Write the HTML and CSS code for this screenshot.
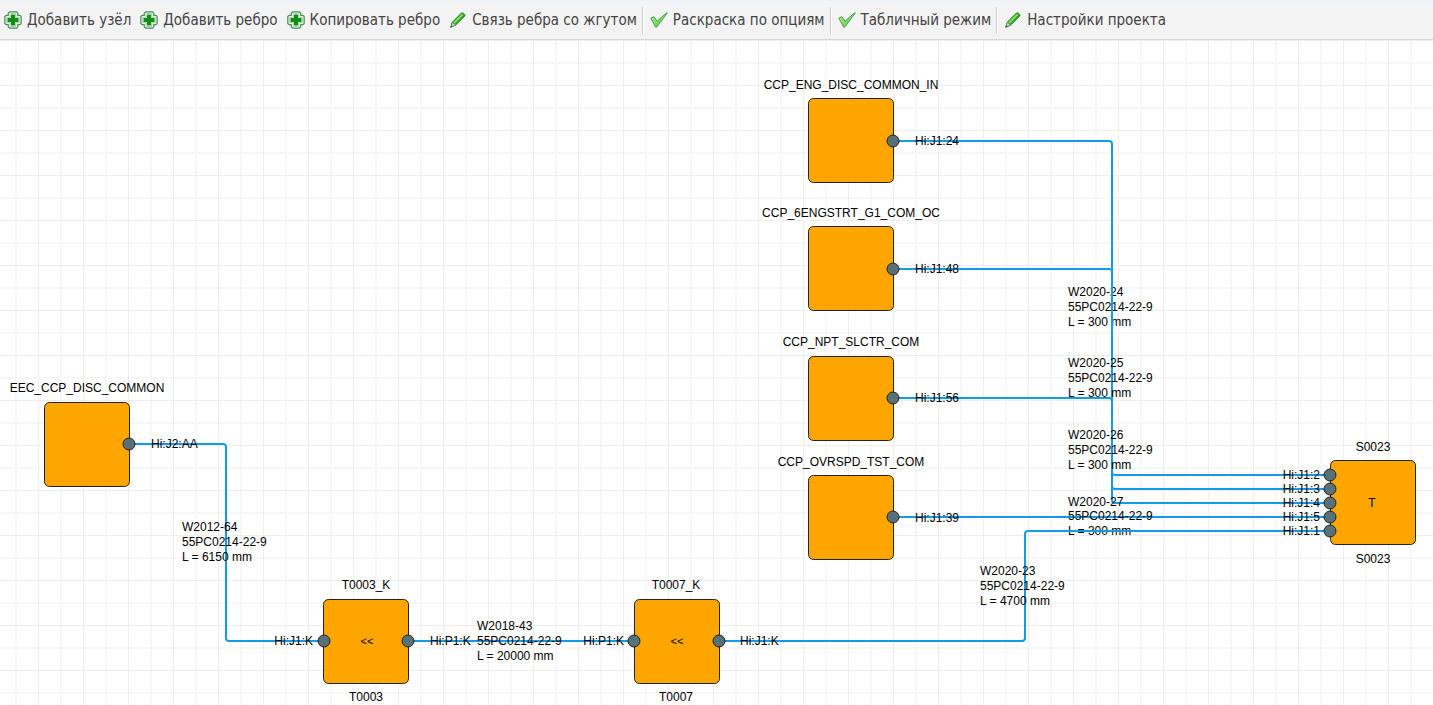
FILE: index.html
```html
<!DOCTYPE html>
<html lang="ru">
<head>
<meta charset="utf-8">
<title>Схема соединений</title>
<link rel="stylesheet" href="styles.css">
</head>
<body class="page">
<svg class="defs" width="0" height="0" aria-hidden="true">
  <defs>
    <linearGradient id="leaf" x1="0" y1="0" x2="1" y2="1">
      <stop offset="0" stop-color="#b6f08a"/><stop offset="1" stop-color="#4cc43c"/>
    </linearGradient>
    <symbol id="plus" viewBox="0 0 18 18">
      <path d="M5.500 .8h7l1.200 1.200v2.300h2.300l1.200 1.200v7l-1.200 1.200h-2.300v2.300l-1.200 1.200h-7l-1.200-1.200v-2.300H2L.8 12.500v-7L2 4.300h2.300V2z" fill="#e3eee4" stroke="#4f8f5e" stroke-width="1.200" stroke-linejoin="round"/>
      <path d="M6.500 2.500h5v4h4v5h-4v4h-5v-4h-4v-5h4z" fill="#fff" stroke="#b4d2b8" stroke-width="1"/>
      <path d="M7 3.500h4V7h3.500v4H11v3.500H7V11H3.500V7H7z" fill="#0f8f12"/>
    </symbol>
    <symbol id="pencil" viewBox="0 0 18 18">
      <path d="M1.800 16.200l1.400-5L12.200 2.300c1.300-1.300 4.600 1 3.700 2.700L6.800 14z" fill="#2fa322" stroke="#3f8a4c" stroke-width="1"/>
      <path d="M4.300 11.500l8.600-8.600 1.400 1-8.700 8.800z" fill="#8fe45a"/>
      <path d="M1.800 16.200l1.400-5 3.600 2.800z" fill="#c3d6c3" stroke="#5c8064" stroke-width=".8"/>
      <path d="M1.500 16.500l.6-2 1.500 1.100z" fill="#2b5a38"/>
    </symbol>
    <symbol id="check" viewBox="0 0 18 18">
      <path d="M.8 7.200L4 5.700l3 4.600 9.400-8.400h1L6.700 16.200H5.600z" fill="url(#leaf)" stroke="#4aa45a" stroke-width="1" stroke-linejoin="round"/>
    </symbol>
  </defs>
</svg>

<header class="toolbar">
  <button class="tool" type="button"><svg class="icon"><use href="#plus"/></svg>Добавить узёл</button>
  <button class="tool" type="button"><svg class="icon"><use href="#plus"/></svg>Добавить ребро</button>
  <button class="tool" type="button"><svg class="icon"><use href="#plus"/></svg>Копировать ребро</button>
  <button class="tool" type="button"><svg class="icon"><use href="#pencil"/></svg>Связь ребра со жгутом</button>
  <span class="divider"></span>
  <button class="tool" type="button"><svg class="icon"><use href="#check"/></svg>Раскраска по опциям</button>
  <span class="divider"></span>
  <button class="tool" type="button"><svg class="icon"><use href="#check"/></svg>Табличный режим</button>
  <span class="divider"></span>
  <button class="tool" type="button"><svg class="icon"><use href="#pencil"/></svg>Настройки проекта</button>
</header>

<main class="workspace">
  <svg class="canvas">
    <defs>
      <pattern id="grid" x="38" y="0" width="45" height="45" patternUnits="userSpaceOnUse">
        <path class="grid-minor" d="M23 0v45M0 23h45"/>
        <path class="grid-major" d="M0 0h45v1H1v44H0z"/>
      </pattern>
      <symbol id="box" width="86" height="86" viewBox="0 0 86 86">
        <rect class="box" x=".5" y=".5" width="85" height="84" rx="5"/>
      </symbol>
    </defs>
    <rect width="100%" height="100%" fill="url(#grid)"/>

    <use href="#box" x="808" y="58"/>
    <use href="#box" x="808" y="186"/>
    <use href="#box" x="808" y="316"/>
    <use href="#box" x="808" y="435"/>
    <use href="#box" x="44" y="362"/>
    <use href="#box" x="323" y="559"/>
    <use href="#box" x="634" y="559"/>
    <use href="#box" x="1330" y="420"/>

    <g class="edge">
      <path class="wire" d="M129 404H223q3 0 3 3V598q0 3 3 3H323"/>
      <text><tspan x="182" y="491">W2012-64</tspan><tspan x="182" dy="15">55PC0214-22-9</tspan><tspan x="182" dy="15">L = 6150 mm</tspan></text>
    </g>
    <g class="edge">
      <path class="wire" d="M408 601H634"/>
      <text><tspan x="477" y="590">W2018-43</tspan><tspan x="477" dy="15">55PC0214-22-9</tspan><tspan x="477" dy="15">L = 20000 mm</tspan></text>
    </g>
    <g class="edge">
      <path class="wire" d="M893 101H1109q3 0 3 3V432q0 3 3 3H1330"/>
      <text><tspan x="1068" y="256">W2020-24</tspan><tspan x="1068" dy="15">55PC0214-22-9</tspan><tspan x="1068" dy="15">L = 300 mm</tspan></text>
    </g>
    <g class="edge">
      <path class="wire" d="M893 229H1109q3 0 3 3V446q0 3 3 3H1330"/>
      <text><tspan x="1068" y="327">W2020-25</tspan><tspan x="1068" dy="15">55PC0214-22-9</tspan><tspan x="1068" dy="15">L = 300 mm</tspan></text>
    </g>
    <g class="edge">
      <path class="wire" d="M893 358H1109q3 0 3 3V460q0 3 3 3H1330"/>
      <text><tspan x="1068" y="399">W2020-26</tspan><tspan x="1068" dy="15">55PC0214-22-9</tspan><tspan x="1068" dy="15">L = 300 mm</tspan></text>
    </g>
    <g class="edge">
      <path class="wire" d="M893 477H1330"/>
      <text><tspan x="1068" y="466">W2020-27</tspan><tspan x="1068" dy="14">55PC0214-22-9</tspan><tspan x="1068" dy="15">L = 300 mm</tspan></text>
    </g>
    <g class="edge">
      <path class="wire" d="M718 601H1022q3 0 3-3V494q0-3 3-3H1330"/>
      <text><tspan x="980" y="535">W2020-23</tspan><tspan x="980" dy="15">55PC0214-22-9</tspan><tspan x="980" dy="15">L = 4700 mm</tspan></text>
    </g>

    <g class="ports">
      <circle cx="893" cy="101" r="6"/>
      <circle cx="893" cy="229" r="6"/>
      <circle cx="893" cy="358" r="6"/>
      <circle cx="893" cy="477" r="6"/>
      <circle cx="129" cy="404" r="6"/>
      <circle cx="324" cy="601" r="6"/>
      <circle cx="408" cy="601" r="6"/>
      <circle cx="634" cy="601" r="6"/>
      <circle cx="719" cy="601" r="6"/>
      <circle cx="1330" cy="435" r="6"/>
      <circle cx="1330" cy="449" r="6"/>
      <circle cx="1330" cy="463" r="6"/>
      <circle cx="1330" cy="477" r="6"/>
      <circle cx="1330" cy="491" r="6"/>
    </g>

    <g class="out">
      <text x="915" y="105">Hi:J1:24</text>
      <text x="915" y="233">Hi:J1:48</text>
      <text x="915" y="362">Hi:J1:56</text>
      <text x="915" y="482">Hi:J1:39</text>
      <text x="151" y="408">Hi:J2:AA</text>
      <text x="430" y="605">Hi:P1:K</text>
      <text x="740" y="605">Hi:J1:K</text>
    </g>
    <g class="in">
      <text x="313" y="605">Hi:J1:K</text>
      <text x="624" y="605">Hi:P1:K</text>
      <text x="1320" y="439">Hi:J1:2</text>
      <text x="1320" y="453">Hi:J1:3</text>
      <text x="1320" y="467">Hi:J1:4</text>
      <text x="1320" y="481">Hi:J1:5</text>
      <text x="1320" y="495">Hi:J1:1</text>
    </g>
    <g class="names">
      <text x="851" y="49">CCP_ENG_DISC_COMMON_IN</text>
      <text x="851" y="177">CCP_6ENGSTRT_G1_COM_OC</text>
      <text x="851" y="306">CCP_NPT_SLCTR_COM</text>
      <text x="851" y="426">CCP_OVRSPD_TST_COM</text>
      <text x="87" y="352">EEC_CCP_DISC_COMMON</text>
      <text x="366" y="549">T0003_K</text>
      <text x="366" y="661">T0003</text>
      <text x="676" y="549">T0007_K</text>
      <text x="676" y="661">T0007</text>
      <text x="1373" y="411">S0023</text>
      <text x="1373" y="523">S0023</text>
      <text class="glyph" x="367" y="605">&lt;&lt;</text>
      <text class="glyph" x="677" y="605">&lt;&lt;</text>
      <text x="1372" y="467">T</text>
    </g>
  </svg>
</main>
</body>
</html>
```
FILE: styles.css
```css
.page {
  margin: 0;
  min-height: 100vh;
  display: flex;
  flex-direction: column;
  background: #fff;
}

.defs {
  position: absolute;
}

.toolbar {
  display: flex;
  align-items: center;
  box-sizing: border-box;
  height: 40px;
  border-top: 1px solid #e8f1ff;
  border-bottom: 1px solid #d8d8d8;
  background: #f3f3f3;
}

.tool {
  display: flex;
  align-items: center;
  gap: 5px;
  padding: 0 5px 0 4px;
  border: 0;
  background: none;
  color: #444;
  font: 15px "DejaVu Sans Condensed", "Noto Sans", sans-serif;
  white-space: nowrap;
}

.icon {
  width: 18px;
  height: 18px;
  flex: none;
}

.divider {
  width: 1px;
  height: 27px;
  margin-right: 3px;
  background: #ccc;
  box-shadow: 1px 0 #fff;
}

.workspace {
  flex: 1;
  display: flex;
  overflow: hidden;
}

.canvas {
  flex: 1;
  font: 12px "Liberation Sans", Arial, sans-serif;
  fill: #000;
}

.grid-major {
  fill: #eee;
}

.grid-minor {
  fill: none;
  stroke: #f7f7f7;
  stroke-width: 2px;
}

.box {
  fill: #ffa500;
  stroke: #222;
}

.wire {
  fill: none;
  stroke: #149be6;
  stroke-width: 2px;
}

.ports {
  fill: #587077;
  stroke: #222;
}

.ports circle {
  stroke-width: 1px;
}

.in {
  text-anchor: end;
}

.names {
  text-anchor: middle;
}

.glyph {
  font-size: 11px;
}
```
